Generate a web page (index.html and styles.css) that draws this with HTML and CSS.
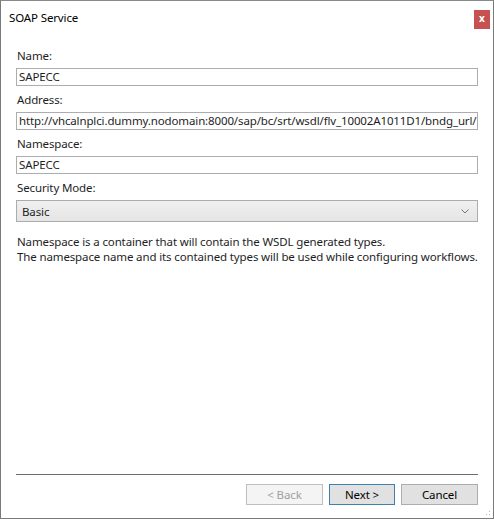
FILE: index.html
```html
<!DOCTYPE html>
<html>
<head>
<meta charset="utf-8">
<link rel="stylesheet" href="styles.css">
</head>
<body>
<div class="window">
  <div class="titlebar">
    <span class="title">SOAP Service</span>
    <span class="close">x</span>
  </div>
  <div class="content">
    <div class="label first">Name:</div>
    <div class="input">SAPECC</div>
    <div class="label">Address:</div>
    <div class="input">http://vhcalnplci.dummy.nodomain:8000/sap/bc/srt/wsdl/flv_10002A1011D1/bndg_url/</div>
    <div class="label">Namespace:</div>
    <div class="input">SAPECC</div>
    <div class="label">Security Mode:</div>
    <div class="select"><span>Basic</span>
      <svg class="chev" width="8" height="5" viewBox="0 0 8 5"><path d="M0.5 0.5 L4 4 L7.5 0.5" fill="none" stroke="#777" stroke-width="1"/></svg>
    </div>
    <p class="help">Namespace is a container that will contain the WSDL generated types.<br>The namespace name and its contained types will be used while configuring workflows.</p>
  </div>
  <div class="footer">
    <div class="sep"></div>
    <div class="buttons">
      <button class="btn back" disabled>&lt; Back</button>
      <button class="btn next">Next &gt;</button>
      <button class="btn cancel">Cancel</button>
    </div>
  </div>
  <div class="grip"></div>
</div>
</body>
</html>
```
FILE: styles.css
```css
html, body {
  margin: 0;
  padding: 0;
  background: #fff;
}
.window {
  position: relative;
  width: 494px;
  height: 519px;
  box-sizing: border-box;
  border: 1px solid #7a7a7a;
  border-top-color: #8a8a8a;
  background: #fff;
  display: flex;
  flex-direction: column;
  font-family: "Noto Sans", "Open Sans", sans-serif;
  font-size: 11.5px;
  letter-spacing: -0.13px;
  color: #1e1e1e;
}
.titlebar {
  height: 36px;
  display: flex;
  justify-content: space-between;
  align-items: flex-start;
  padding: 8px 3px 0 8px;
  box-sizing: border-box;
}
.title {
  line-height: 17px;
  color: #000;
}
.close {
  width: 16px;
  height: 19px;
  margin-top: 1px;
  background: #c75050;
  color: #fff;
  font-weight: bold;
  font-size: 10px;
  letter-spacing: 0;
  line-height: 17px;
  text-align: center;
}
.content {
  flex: 1;
  padding: 0 15px;
}
.label {
  height: 20px;
  line-height: 20px;
  margin-top: 4px;
  margin-bottom: 2px;
  padding-left: 1px;
}
.label.first {
  margin-top: 9px;
}
.input {
  height: 18px;
  box-sizing: border-box;
  border: 1px solid #abadb3;
  line-height: 16px;
  padding-left: 2px;
  white-space: nowrap;
  overflow: hidden;
}
.select {
  height: 22px;
  box-sizing: border-box;
  border: 1px solid #acacac;
  background: linear-gradient(#f0f0f0, #e5e5e5);
  display: flex;
  align-items: center;
  justify-content: space-between;
  padding: 0 8px 0 5px;
}
.help {
  margin: 12px 0 0 1px;
  line-height: 15px;
  white-space: nowrap;
}
.footer {
  padding: 0 15px 13px;
}
.sep {
  height: 1px;
  border-top: 1px solid #6e6e6e;
}
.buttons {
  display: flex;
  justify-content: flex-end;
  gap: 6px;
  margin-top: 8px;
}
.btn {
  font-family: inherit;
  font-size: 11.5px;
  letter-spacing: -0.13px;
  height: 21px;
  box-sizing: border-box;
  padding: 0;
  margin: 0;
  border: 1px solid #adadad;
  background: #e1e1e1;
  color: #000;
}
.back {
  width: 77px;
  background: #f4f4f4;
  border-color: #bfbfbf;
  color: #a0a0a0;
}
.next {
  width: 66px;
  border-color: #3c7fb1;
  background: #e1e1e1;
}
.cancel {
  width: 77px;
}
.grip {
  position: absolute;
  right: 1px;
  bottom: 1px;
  width: 10px;
  height: 10px;
  background-image: radial-gradient(circle, #b5b5b5 0.8px, transparent 1px);
  background-size: 3px 3px;
  clip-path: polygon(100% 0, 100% 100%, 0 100%);
}
```
